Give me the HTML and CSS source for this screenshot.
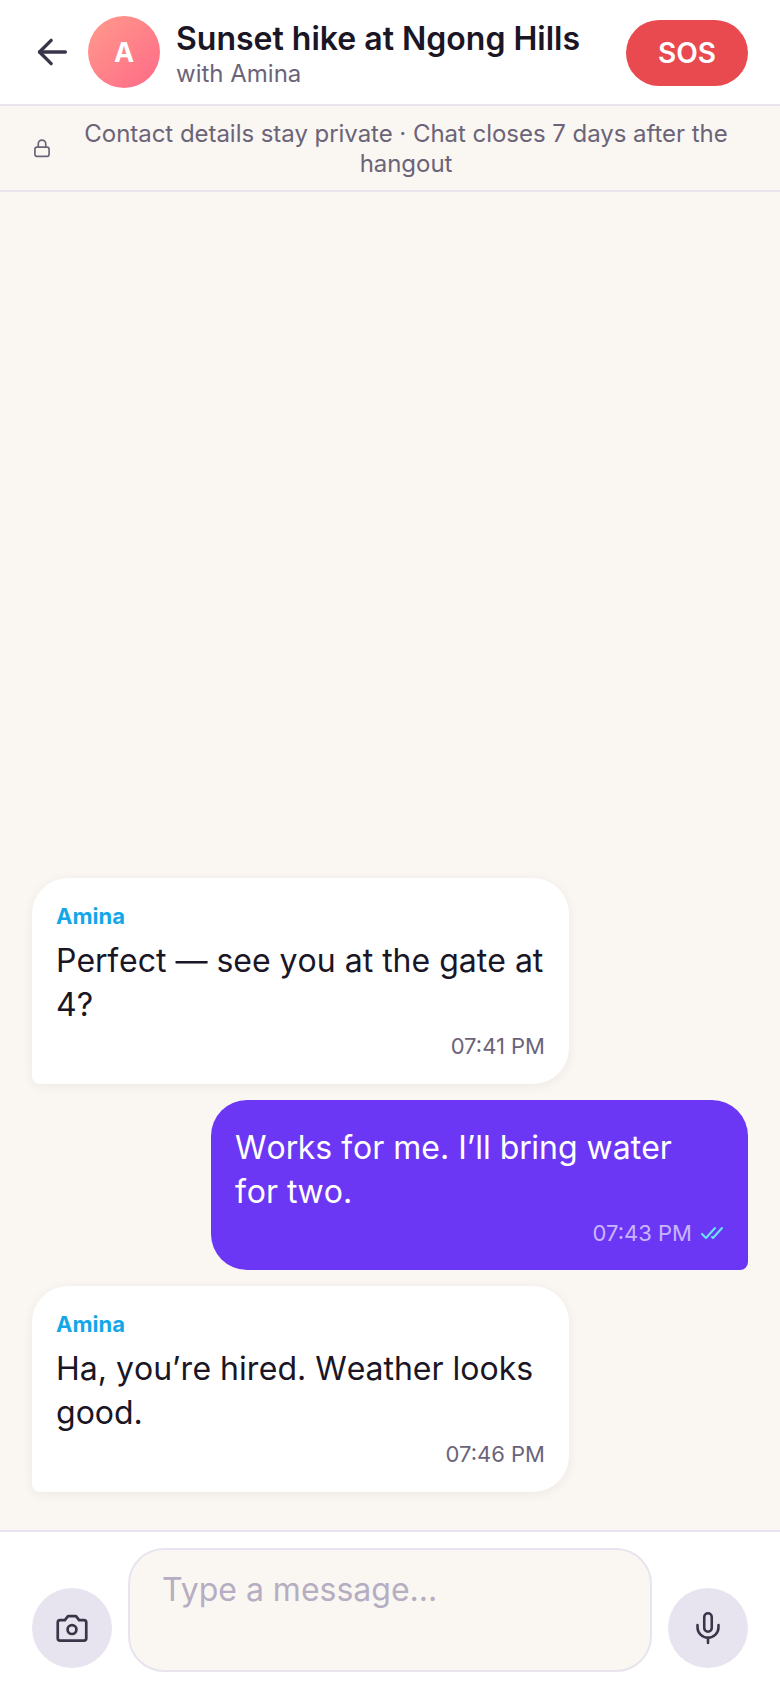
FILE: index.html
```html
<!DOCTYPE html>
<html lang="en">
<head>
<meta charset="utf-8">
<title>Chat</title>
<link rel="stylesheet" href="styles.css">
</head>
<body>
<div class="app">
  <header class="header">
    <button class="back" aria-label="Back">
      <svg width="40" height="40" viewBox="0 0 24 24" fill="none" stroke="#3a3548" stroke-width="2" stroke-linecap="round" stroke-linejoin="round"><path d="M20 12H4.500"/><path d="M11.500 5l-7 7 7 7"/></svg>
    </button>
    <div class="avatar">A</div>
    <div class="titles">
      <div class="title">Sunset hike at Ngong Hills</div>
      <div class="subtitle">with Amina</div>
    </div>
    <button class="sos">SOS</button>
  </header>
  <div class="notice">
    <svg class="lock" width="20" height="20" viewBox="0 0 24 24" fill="none" stroke="#6b6478" stroke-width="2" stroke-linecap="round" stroke-linejoin="round"><rect x="3.500" y="11" width="17" height="11" rx="2.500"/><path d="M7.500 11V7a4.500 4.500 0 0 1 9 0v4"/></svg>
    <p class="notice-text">Contact details stay private · Chat closes 7 days after the hangout</p>
  </div>
  <main class="messages">
    <div class="bubble theirs">
      <div class="sender">Amina</div>
      <div class="body">Perfect — see you at the gate at 4?</div>
      <div class="meta">07:41 PM</div>
    </div>
    <div class="bubble mine">
      <div class="body">Works for me. I’ll bring water for two.</div>
      <div class="meta">07:43 PM
        <svg width="24" height="24" viewBox="0 0 24 24" fill="none" stroke="#66e6f5" stroke-width="2" stroke-linecap="round" stroke-linejoin="round"><path d="M2 13l4 4 9-10"/><path d="M12 16l1 1 9-10"/></svg>
      </div>
    </div>
    <div class="bubble theirs">
      <div class="sender">Amina</div>
      <div class="body">Ha, you’re hired. Weather looks good.</div>
      <div class="meta">07:46 PM</div>
    </div>
  </main>
  <footer class="composer">
    <button class="round" aria-label="Camera">
      <svg width="38" height="38" viewBox="0 0 24 24" fill="none" stroke="#3a3548" stroke-width="1.700" stroke-linecap="round" stroke-linejoin="round"><path d="M3 8.500A1.500 1.500 0 0 1 4.500 7h3L9.500 4.500h5L16.500 7h3A1.500 1.500 0 0 1 21 8.500v10a1.500 1.500 0 0 1-1.500 1.500h-15A1.500 1.500 0 0 1 3 18.500z"/><circle cx="12" cy="13" r="2.800"/></svg>
    </button>
    <div class="input">Type a message...</div>
    <button class="round" aria-label="Microphone">
      <svg width="36" height="36" viewBox="0 0 24 24" fill="none" stroke="#3a3548" stroke-width="1.700" stroke-linecap="round" stroke-linejoin="round"><rect x="9.500" y="2.200" width="5" height="12.300" rx="2.500"/><path d="M5 10v1.500a7 7 0 0 0 14 0V10"/><path d="M12 18.500V22"/></svg>
    </button>
  </footer>
</div>
</body>
</html>
```

FILE: styles.css
```css
* { box-sizing: border-box; }
html, body { margin: 0; padding: 0; height: 100%; }
body { font-family: Inter, "Liberation Sans", sans-serif; background: #faf6f1; color: #1a1625; }
button { font-family: inherit; border: 0; padding: 0; cursor: pointer; }
.app { height: 1688px; display: flex; flex-direction: column; }

.header { height: 106px; flex: none; display: flex; align-items: center; padding: 0 32px; gap: 16px; background: #fff; border-bottom: 2px solid #e8e4ef; }
.back { width: 40px; height: 40px; background: none; display: flex; align-items: center; justify-content: center; flex: none; }
.avatar { width: 72px; height: 72px; border-radius: 50%; flex: none; background: linear-gradient(135deg, #ff9a8b, #ff6a88); color: #fff; font-size: 27px; font-weight: 700; display: flex; align-items: center; justify-content: center; }
.titles { flex: 1; min-width: 0; padding-top: 4px; }
.title { font-size: 32px; font-weight: 600; line-height: 40px; }
.subtitle { font-size: 24px; line-height: 30px; color: #6b6478; }
.sos { width: 122px; height: 66px; border-radius: 33px; background: #e84a4f; color: #fff; font-size: 28px; font-weight: 600; flex: none; margin-top: 2px; }

.notice { flex: none; height: 86px; display: flex; align-items: center; gap: 12px; padding: 2px 32px 0; background: #faf6f1; border-bottom: 2px solid #e8e4ef; }
.lock { flex: none; margin-top: -2px; }
.notice-text { margin: 0; flex: 1; text-align: center; font-size: 24px; line-height: 30px; letter-spacing: -0.04px; color: #6b6478; }

.messages { flex: 1; min-height: 0; display: flex; flex-direction: column; justify-content: flex-end; gap: 16px; padding: 32px 32px 38px; }
.bubble { width: 537px; padding: 24px 24px 23px; border-radius: 36px; }
.theirs { align-self: flex-start; background: #fff; border-bottom-left-radius: 8px; box-shadow: 0 2px 12px rgba(26, 22, 37, 0.06); }
.mine { align-self: flex-end; background: #6c37f4; color: #fff; border-bottom-right-radius: 8px; padding-top: 26px; padding-bottom: 22px; }
.sender { font-size: 22px; font-weight: 700; line-height: 28px; color: #14a7e8; margin-bottom: 9px; }
.body { font-size: 32px; line-height: 44px; font-kerning: none; }
.mine .body { padding-right: 4px; }
.meta { display: flex; align-items: center; justify-content: flex-end; gap: 8px; font-size: 22px; line-height: 30px; margin-top: 4px; color: #6b6478; }
.mine .meta { color: rgba(255, 255, 255, 0.65); }

.composer { flex: none; height: 158px; display: flex; align-items: flex-end; gap: 16px; padding: 16px 32px 16px; background: #fff; border-top: 2px solid #e8e4ef; }
.round { width: 80px; height: 80px; border-radius: 50%; background: #e8e4ef; flex: none; display: flex; align-items: center; justify-content: center; margin-bottom: 4px; }
.input { flex: 1; height: 124px; border-radius: 36px; border: 2px solid #e8e4ef; background: #faf6f1; padding: 19px 32px; font-size: 32px; line-height: 42px; color: #b5aec2; }
```
